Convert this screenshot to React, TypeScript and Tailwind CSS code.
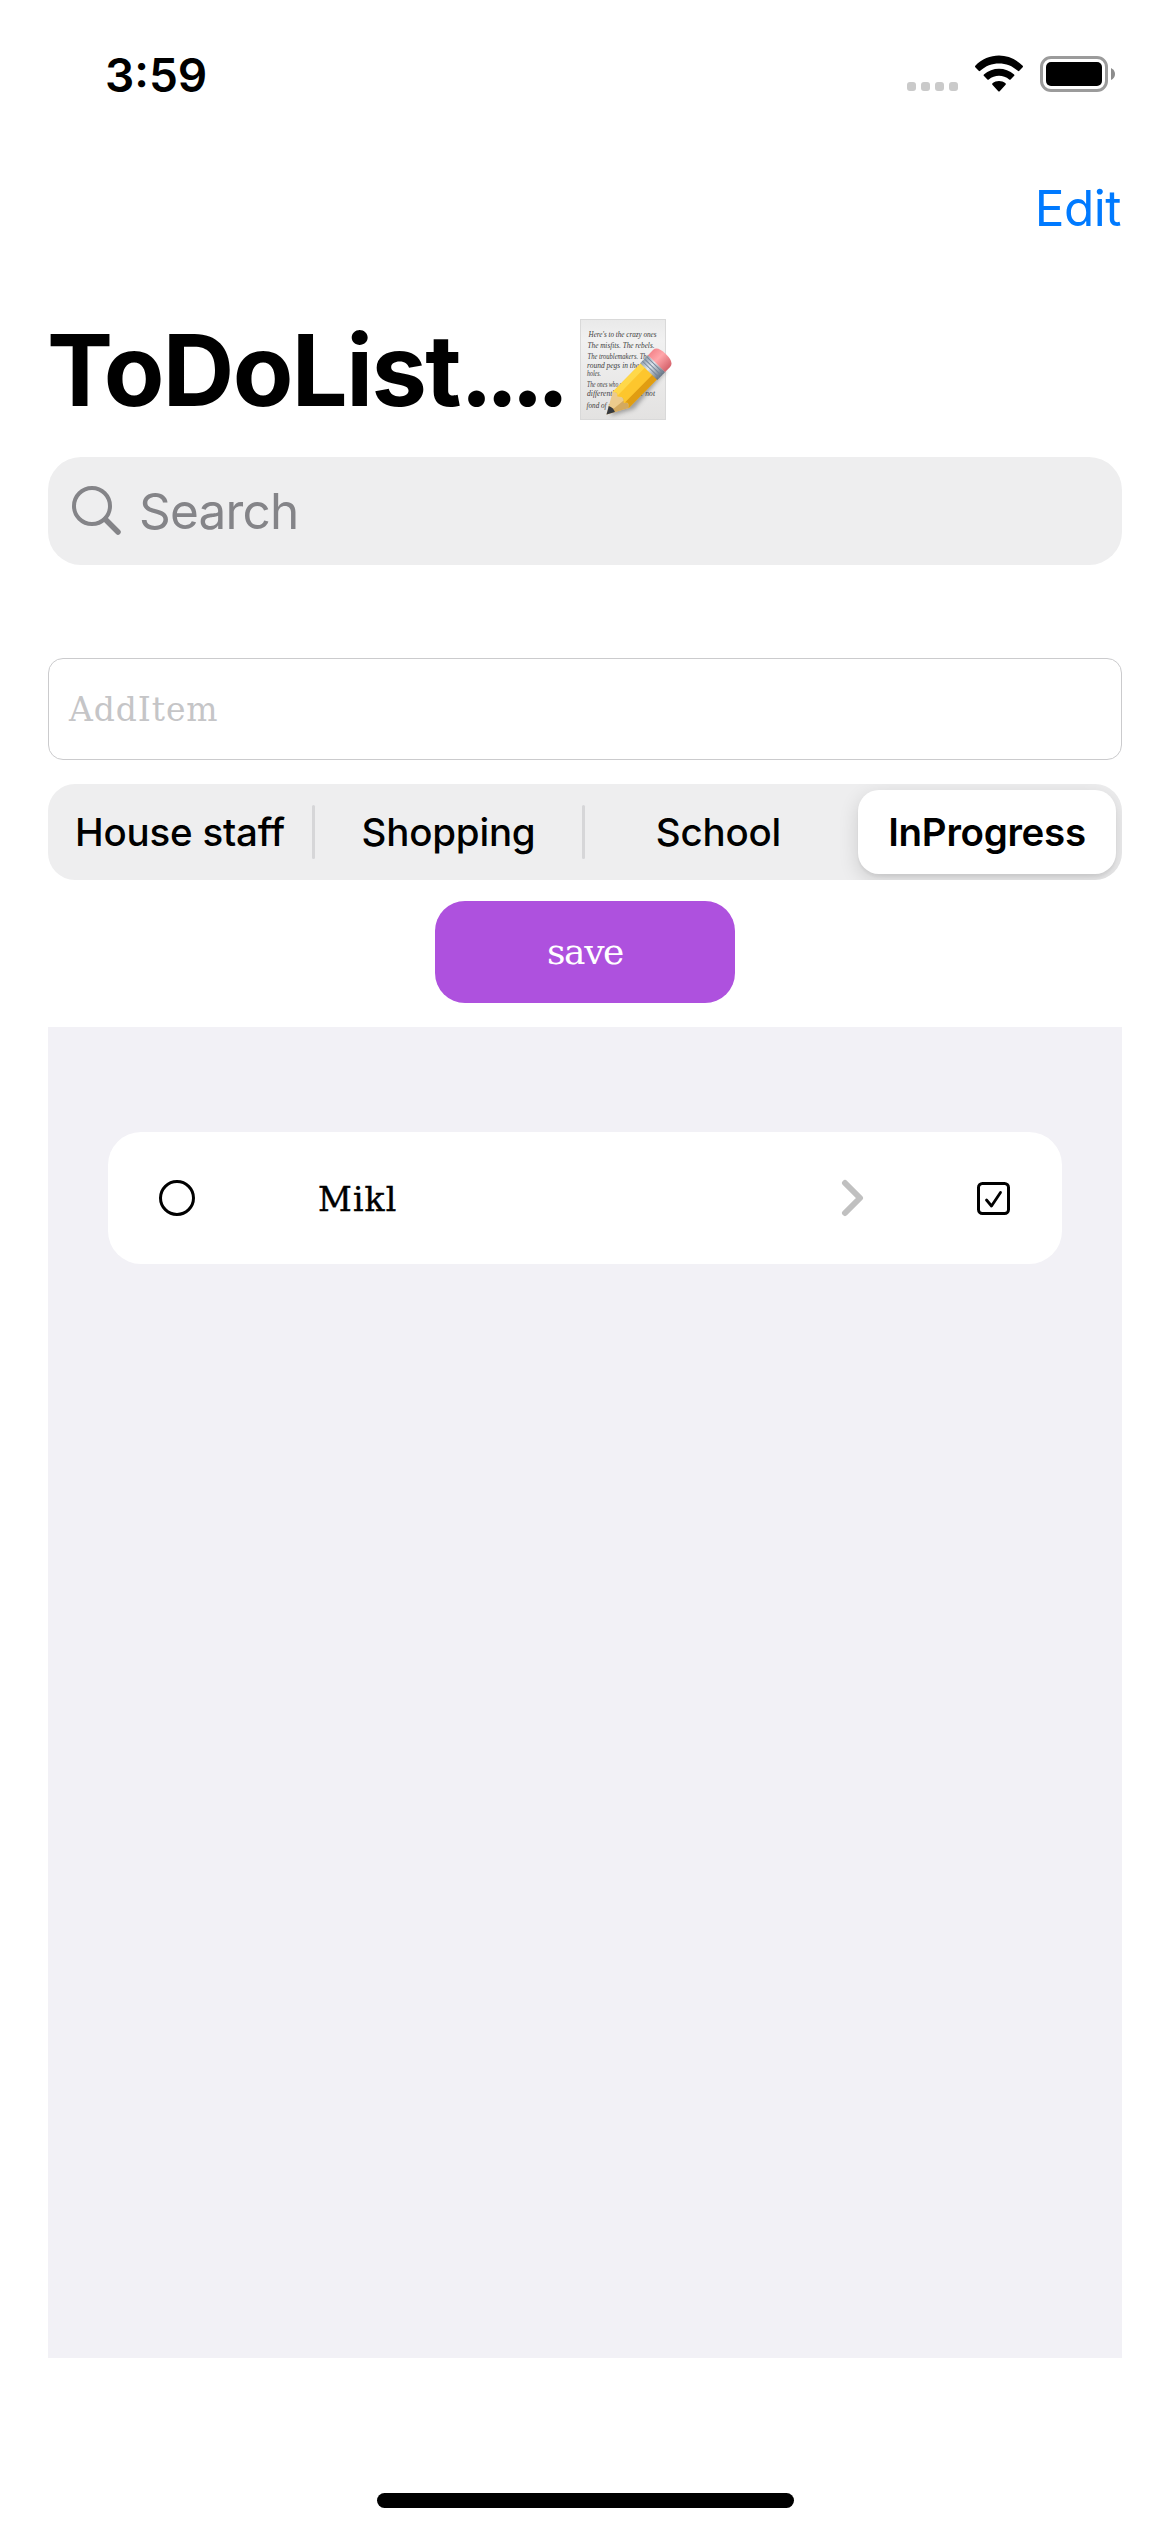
import React from "react";

const SCRIPT_LINES: [string, number, number, number][] = [
  ["Here's to the crazy ones", 8.5, 17.5, 68],
  ["The misfits. The rebels.", 7.5, 29, 67],
  ["The troublemakers. The", 7.5, 40, 62],
  ["round pegs in the", 7, 48.5, 52],
  ["holes.", 7, 57, 14],
  ["The ones who see", 7, 67.5, 40],
  ["differently. They're not", 7, 77, 68],
  ["fond of rules.", 6.5, 89, 38],
];

function MemoEmoji() {
  return (
    <svg className="mt-[19px] h-[103px] w-[94px] shrink-0" viewBox="0 0 94 103">
      <defs>
        <linearGradient id="paper" x1="0" y1="0" x2="0" y2="1">
          <stop offset="0" stopColor="#e9e9e9" />
          <stop offset="0.2" stopColor="#f1f1f1" />
          <stop offset="1" stopColor="#e3e2e1" />
        </linearGradient>
        <linearGradient id="metal" x1="0" y1="0" x2="1" y2="0">
          <stop offset="0" stopColor="#8f9dac" />
          <stop offset="0.4" stopColor="#dfe7ee" />
          <stop offset="1" stopColor="#66717f" />
        </linearGradient>
        <linearGradient id="rubber" x1="0" y1="0" x2="1" y2="0">
          <stop offset="0" stopColor="#f4868c" />
          <stop offset="0.4" stopColor="#ffa6aa" />
          <stop offset="1" stopColor="#d5626b" />
        </linearGradient>
        <filter id="soft" x="-30%" y="-30%" width="160%" height="160%">
          <feGaussianBlur stdDeviation="2" />
        </filter>
      </defs>
      <rect x="0.5" y="0.5" width="85" height="100" fill="url(#paper)" stroke="#d9d9d9" />
      <g fill="#3c3c3c" fontFamily="Liberation Serif, serif" fontStyle="italic" fontSize="8.4">
        {SCRIPT_LINES.map(([text, x, y, width]) => (
          <text key={text} x={x} y={y} textLength={width} lengthAdjust="spacingAndGlyphs">
            {text}
          </text>
        ))}
      </g>
      <path d="M30 97 L38 84 L80 46 L86 52 L54 90 Z" fill="#555" opacity="0.5" filter="url(#soft)" />
      {/* pencil, drawn upright with its tip at the origin and turned into place */}
      <g transform="translate(26.5 95.5) rotate(44.5) scale(1.2 1.02)">
        <path d="M0 0 L-9.5 -20 L-9 -22 L9 -22 L9.5 -20 Z" fill="#eccb8d" />
        <path d="M0 0 L2 -22 L9 -22 L9.5 -20 Z" fill="#d3a95f" />
        <path d="M0 0 L-3.6 -7.5 Q0 -9.5 3.6 -7.5 Z" fill="#36393e" />
        <path d="M-9.5 -19.5 V-60 H9.5 V-19.5 Q6.5 -25 3.5 -20 Q0 -25 -4 -20 Q-7 -24 -9.5 -19.5 Z" fill="#fdc62d" />
        <path d="M-9.5 -19.5 V-60 H-4.5 V-21 Q-7 -24 -9.5 -19.5 Z" fill="#ffd84a" />
        <path d="M4 -21 V-60 H9.5 V-19.5 Q6.5 -25 4 -21 Z" fill="#e09d12" />
        <rect x="-10" y="-70" width="20" height="11" fill="url(#metal)" />
        <path d="M-10 -62 H10 M-10 -65 H10 M-10 -68 H10" stroke="#75869a" strokeWidth="0.9" />
        <path d="M-10 -70 V-77 Q-10 -83 0 -83 Q10 -83 10 -77 V-70 Z" fill="url(#rubber)" />
      </g>
    </svg>
  );
}

function StatusBar() {
  return (
    <div className="flex h-[150px] items-start justify-between pl-[105px] pr-[53px]">
      <div className="pt-[51px] text-[46px] font-semibold leading-[48px]">3:59</div>
      <div className="flex pt-[54px]">
        <div className="flex gap-[5px] pt-[28px]">
          {[0, 1, 2, 3].map((dot) => (
            <span key={dot} className="size-[9px] rounded-[3px] bg-[#cacaca]" />
          ))}
        </div>
        <svg className="ml-[16px] mt-px h-[38px] w-[50px]" viewBox="0 0 50 38" fill="#000">
          <path d="M1.3 12.2 Q0.6 11.6 1.3 10.8 C14.3 -2.8 35.7 -2.8 48.7 10.8 Q49.4 11.6 48.7 12.2 L45.3 15.8 Q44.6 16.5 43.8 15.8 C33.4 6 16.6 6 6.2 15.8 Q5.4 16.5 4.7 15.8 Z" />
          <path d="M9.8 20.8 Q9.1 20.1 9.9 19.4 C18.5 11.8 31.5 11.8 40.1 19.4 Q40.9 20.1 40.2 20.8 L36.6 24.4 Q35.9 25 35.2 24.5 C29.4 19.6 20.6 19.6 14.8 24.5 Q14.1 25 13.4 24.4 Z" />
          <path d="M18.4 29.7 Q17.7 29 18.5 28.3 C22.2 25.2 27.8 25.2 31.5 28.3 Q32.3 29 31.6 29.7 L25.7 36.2 Q25 36.9 24.3 36.2 Z" />
        </svg>
        <svg className="ml-[16px] h-[38px] w-[77px]" viewBox="0 0 77 38">
          <rect x="1.5" y="3.5" width="65" height="33" rx="9.5" fill="none" stroke="#9b9b9b" strokeWidth="3" />
          <rect x="6" y="8" width="56" height="24" rx="5" fill="#000" />
          <path d="M71 14 Q75 16 75 20 Q75 24 71 26 Z" fill="#8c8c8c" />
        </svg>
      </div>
    </div>
  );
}

const SEGMENTS = [
  { label: "House staff", box: "w-[264px]" },
  { label: "Shopping", box: "w-[267px]" },
  { label: "School", box: "w-[267px]" },
];

function SegmentedControl() {
  return (
    <div className="mt-[24px] flex h-[96px] items-center overflow-hidden rounded-[27px] bg-[#eeeeef] text-[38.5px] leading-[48px]">
      {SEGMENTS.map(({ label, box }, index) => (
        <React.Fragment key={label}>
          <button className={`${box} shrink-0 whitespace-nowrap text-center font-medium tracking-[-0.2px]`}>{label}</button>
          {index < 2 && <span className="h-[54px] w-[3px] shrink-0 rounded-full bg-[#d6d6d8]" />}
        </React.Fragment>
      ))}
      <button className="ml-[6px] h-[84px] w-[258px] shrink-0 rounded-[21px] bg-white font-semibold tracking-[-0.3px] shadow-[0_6px_20px_rgba(0,0,0,0.14),0_3px_3px_rgba(0,0,0,0.05)]">
        InProgress
      </button>
    </div>
  );
}

function TodoRow() {
  return (
    <div className="flex h-[132px] items-center rounded-[33px] bg-white pl-[51px] pr-[51px]">
      <span className="size-[36px] rounded-full border-[3px] border-black" />
      <span className="ml-[123px] pt-[3px] font-['DejaVu_Serif',serif] text-[33px] leading-[40px] tracking-[1.1px] [-webkit-text-stroke:0.4px_black]">
        Mikl
      </span>
      <svg className="ml-auto h-[38px] w-[24px]" viewBox="0 0 24 38" fill="none" stroke="#c0c0c0" strokeWidth="6" strokeLinecap="round" strokeLinejoin="round">
        <path d="M4 4 L19 19 L4 34" />
      </svg>
      <svg className="ml-[112px] mt-px h-[34px] w-[34px]" viewBox="0 0 34 34" fill="none" stroke="#000" strokeLinecap="round" strokeLinejoin="round">
        <rect x="1.5" y="1.5" width="30" height="30" rx="4" strokeWidth="3" />
        <path d="M9.5 18 L14.5 24 L23.5 10.5" strokeWidth="2.8" />
      </svg>
    </div>
  );
}

export default function App() {
  return (
    <div className="flex h-[2532px] w-[1170px] flex-col overflow-hidden bg-white font-[Inter,sans-serif] text-black">
      <StatusBar />
      <div className="flex justify-end pr-[49px]">
        <button className="mt-[28px] text-[49.5px] leading-[60px] tracking-[-0.5px] text-[#007aff]">Edit</button>
      </div>
      <div className="flex h-[219px] items-start pl-[47px] pt-[62px]">
        <h1 className="w-[533px] shrink-0 whitespace-nowrap pt-[10px] text-[99px] font-bold leading-[120px] tracking-[-1.6px]">
          ToDoList<span className="tracking-[-7.6px]">....</span>
        </h1>
        <MemoEmoji />
      </div>
      <main className="flex flex-col px-[48px]">
        <div className="flex h-[108px] items-center rounded-[33px] bg-[#eeeeef] pl-[24px]">
          <svg className="h-[50px] w-[50px]" viewBox="0 0 50 50" fill="none" stroke="#848488" strokeLinecap="round">
            <circle cx="20" cy="20" r="18" strokeWidth="4" />
            <path d="M33.5 33.5 L46 46" strokeWidth="5.5" />
          </svg>
          <span className="ml-[17px] text-[49.5px] leading-[60px] tracking-[-0.8px] text-[#848488]">Search</span>
        </div>
        <div className="mt-[93px] flex h-[102px] items-center rounded-[15px] border border-[#cbcbcd] pl-[20px]">
          <span className="pt-[2px] font-['DejaVu_Serif',serif] text-[33px] leading-[40px] tracking-[0.9px] text-[#c5c5c7]">
            AddItem
          </span>
        </div>
        <SegmentedControl />
        <button className="mt-[21px] h-[102px] w-[300px] self-center rounded-[30px] bg-[#ae51de] font-['DejaVu_Serif',serif] text-[36px] leading-[40px] tracking-[-1.4px] text-white">
          save
        </button>
        <section className="mt-[24px] h-[1331px] bg-[#f2f1f6] px-[60px] pt-[105px]">
          <TodoRow />
        </section>
      </main>
      <div className="mt-[135px] h-[15px] w-[417px] self-center rounded-full bg-black" />
    </div>
  );
}
